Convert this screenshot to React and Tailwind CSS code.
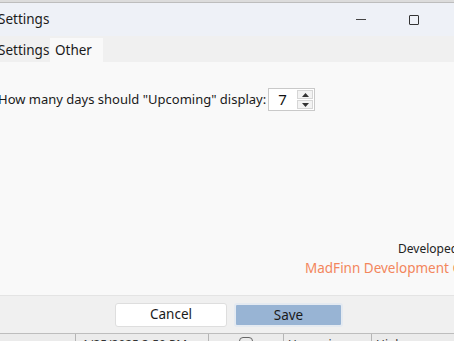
function Spinner() {
  return (
    <div className="flex items-center h-[23px] w-[47px] border border-[#c9c9c9] bg-white">
      <span className="flex-1 pl-[9px] text-[15px] text-[#111]">7</span>
      <div className="flex flex-col w-[17px] h-full py-[1px] pr-[1px] gap-[1px]">
        <button className="flex-1 flex items-center justify-center bg-[#f3f3f3] border border-[#d6d6d6]">
          <svg width="7" height="4" viewBox="0 0 7 4"><path d="M0 4 L3.5 0 L7 4 Z" fill="#333" /></svg>
        </button>
        <button className="flex-1 flex items-center justify-center bg-[#f3f3f3] border border-[#d6d6d6]">
          <svg width="7" height="4" viewBox="0 0 7 4"><path d="M0 0 L3.5 4 L7 0 Z" fill="#333" /></svg>
        </button>
      </div>
    </div>
  )
}

export default function App() {
  return (
    <div className="w-[454px] h-[341px] overflow-hidden flex flex-col bg-[#f9f9f9] font-['Noto_Sans','Open_Sans',sans-serif] text-[#1a1a1a]">
      <div className="h-[3px] bg-[#dcdcdc] border-b border-[#bdbdbd]" />

      {/* title bar */}
      <div className="h-[33px] flex items-center bg-[#eef1f7]">
        <span className="ml-[-2px] text-[13.5px] text-[#1b1b1b]">Settings</span>
        <div className="ml-auto flex items-center gap-[43px] pr-[35px]">
          <div className="w-[10px] h-px bg-[#444]" />
          <div className="w-[10px] h-[10px] border-[1.5px] border-[#333] rounded-[1px]" />
        </div>
      </div>

      {/* tabs */}
      <div className="h-[26px] flex items-end bg-[#f0f0f0]">
        <div className="h-[24px] w-[52px] flex items-center ml-[-2px] text-[13.5px]">Settings</div>
        <div className="h-[24px] w-[53px] flex items-center pl-[5px] bg-[#f9f9f9] text-[13.5px]">Other</div>
      </div>

      {/* content */}
      <div className="flex-1 flex flex-col">
        <div className="flex items-center gap-[2px] mt-[26px] ml-[-2px]">
          <span className="text-[13px]">How many days should "Upcoming" display:</span>
          <Spinner />
        </div>
        <div className="mt-auto mb-[17px] pl-[305px] flex flex-col items-start whitespace-nowrap">
          <span className="ml-[93px] text-[12px] text-[#222]">Developed by</span>
          <span className="text-[13.5px] text-[#f3865c] leading-[20px]">MadFinn Development Co.</span>
        </div>
      </div>

      {/* footer */}
      <div className="h-[38px] flex items-center justify-center gap-[7px] bg-[#f0f0f0] border-t border-[#e4e4e4] pl-[4px]">
        <button className="w-[112px] h-[24px] rounded-[3px] bg-white border border-[#dedede] text-[13.5px]">Cancel</button>
        <button className="w-[109px] h-[24px] rounded-[3px] bg-[#98b4d4] border-2 border-[#e4eaf1] text-[13.5px]">Save</button>
      </div>

      {/* grid row peeking below */}
      <div className="h-[8px] flex border-t border-[#bdbdbd] bg-[#ebebeb] overflow-hidden text-[12px] leading-[14px] text-[#333]">
        <div className="w-[76px] border-r border-[#b5b5b5]" />
        <div className="w-[133px] border-r border-[#b5b5b5] pl-[6px] pt-[4px]">1/25/2025 3:50 PM</div>
        <div className="w-[75px] border-r border-[#b5b5b5] flex justify-center pt-[3px]">
          <div className="w-[14px] h-[14px] rounded-[4px] border border-[#666]" />
        </div>
        <div className="w-[88px] border-r border-[#b5b5b5] pl-[4px] pt-[4px]">Upcoming</div>
        <div className="flex-1 pl-[4px] pt-[4px]">High</div>
      </div>
    </div>
  )
}
